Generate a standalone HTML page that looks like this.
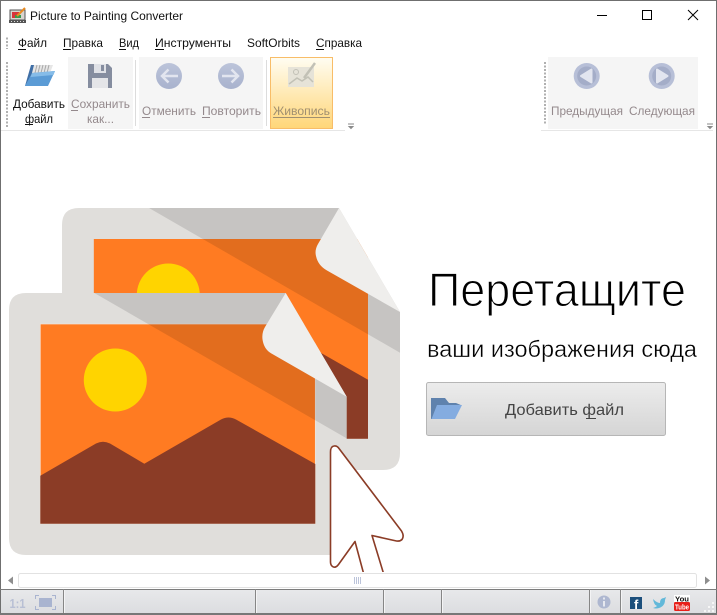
<!DOCTYPE html>
<html lang="ru"><head><meta charset="utf-8"><title>Picture to Painting Converter</title>
<style>
html,body{margin:0;padding:0;background:#fff;width:717px;height:615px;overflow:hidden}
svg{display:block;position:absolute;left:0;top:0}
text{font-family:"Liberation Sans",sans-serif}
</style></head><body>
<svg width="717" height="615" viewBox="0 0 717 615" xmlns="http://www.w3.org/2000/svg">
<defs>
<linearGradient id="live" x1="0" y1="0" x2="0" y2="1"><stop offset="0" stop-color="#fffdf2"/><stop offset="1" stop-color="#ffd678"/></linearGradient>
<linearGradient id="btn" x1="0" y1="0" x2="0" y2="1"><stop offset="0" stop-color="#ececec"/><stop offset="1" stop-color="#d5d5d5"/></linearGradient>
<linearGradient id="st" x1="0" y1="0" x2="0" y2="1"><stop offset="0" stop-color="#e8e9eb"/><stop offset="1" stop-color="#dcdde0"/></linearGradient>
<linearGradient id="orb" x1="0" y1="0" x2="0" y2="1"><stop offset="0" stop-color="#bcc4da"/><stop offset="1" stop-color="#a8b2cd"/></linearGradient>
<clipPath id="backc"><path d="M79 208H339L400 312V453Q400 470 383 470H79Q62 470 62 453V225Q62 208 79 208Z"/></clipPath>
<clipPath id="backo"><rect x="93.7" y="239" width="274.3" height="199.7"/></clipPath>
<clipPath id="frontc"><path d="M26 293H285.7L346.7 396.7V555H26Q9 555 9 538V310Q9 293 26 293Z"/></clipPath>
<clipPath id="curc"><rect x="320" y="440" width="100" height="132"/></clipPath>
</defs>
<rect width="717" height="615" fill="#fff"/>

<!-- window border -->
<rect x="0" y="0" width="717" height="1" fill="#6f6f6f"/>
<rect x="0" y="0" width="1" height="615" fill="#6f6f6f"/>
<rect x="716" y="0" width="1" height="615" fill="#6f6f6f"/>

<!-- title bar -->
<rect x="10" y="10" width="15" height="10" fill="#d8d4d0" stroke="#555" stroke-width="1"/>
<rect x="12" y="12" width="7" height="6" fill="#d8333a"/>
<rect x="15" y="15" width="6" height="3" fill="#3a9a4a"/>
<path d="M17 16L25 8" stroke="#e88a20" stroke-width="2"/>
<rect x="9" y="20" width="17" height="3" fill="#555"/>
<path d="M11 21.5h1M14 21.5h1M17 21.5h1M20 21.5h1M23 21.5h1" stroke="#ddd" stroke-width="1"/>
<text x="30" y="20" font-size="12" fill="#111" textLength="153" lengthAdjust="spacingAndGlyphs">Picture to Painting Converter</text>
<rect x="597" y="15" width="10" height="1" fill="#000"/>
<rect x="642.5" y="10.5" width="9" height="9" fill="none" stroke="#000"/>
<path d="M688 10L698 20M698 10L688 20" stroke="#000" stroke-width="1" fill="none"/>

<!-- menu -->
<path d="M7 37.500V49" stroke="#b0b0b0" stroke-width="2" stroke-dasharray="2 1.500"/>
<g font-size="12" fill="#111">
<text x="18" y="47" textLength="29" lengthAdjust="spacingAndGlyphs">Файл</text>
<text x="63" y="47" textLength="40" lengthAdjust="spacingAndGlyphs">Правка</text>
<text x="119" y="47" textLength="20" lengthAdjust="spacingAndGlyphs">Вид</text>
<text x="155" y="47" textLength="76" lengthAdjust="spacingAndGlyphs">Инструменты</text>
<text x="247" y="47" textLength="53" lengthAdjust="spacingAndGlyphs">SoftOrbits</text>
<text x="316" y="47" textLength="46" lengthAdjust="spacingAndGlyphs">Справка</text>
</g>
<g fill="#111">
<rect x="18" y="49" width="8" height="1"/><rect x="63" y="49" width="8" height="1"/><rect x="119" y="49" width="7" height="1"/><rect x="155" y="49" width="9" height="1"/><rect x="316" y="49" width="8" height="1"/>
</g>

<!-- toolbar -->
<path d="M7 62V128" stroke="#b0b0b0" stroke-width="2" stroke-dasharray="2 1.500"/>
<rect x="68" y="57" width="65" height="72" fill="#f5f5f5"/>
<rect x="135" y="60" width="1" height="66" fill="#dcdcdc"/>
<rect x="139" y="57" width="124" height="72" fill="#f5f5f5"/>
<rect x="266" y="60" width="1" height="66" fill="#dcdcdc"/>
<rect x="270.500" y="57.500" width="62" height="71" fill="url(#live)" stroke="#f8bd68"/>
<rect x="1" y="130" width="344" height="1" fill="#e6e6e6"/>
<path d="M348 124h6M349 126.500h4l-2 2z" stroke="#8a8a8a" stroke-width="1" fill="#8a8a8a"/>

<rect x="548" y="57" width="150" height="72" fill="#f5f5f5"/>
<path d="M545 62V124" stroke="#b0b0b0" stroke-width="2" stroke-dasharray="2 1.500"/>
<rect x="541" y="130" width="172" height="1" fill="#e6e6e6"/>
<path d="M707 124h6M708 126.500h4l-2 2z" stroke="#8a8a8a" stroke-width="1" fill="#8a8a8a"/>

<!-- add file icon -->
<path d="M31 65H36L29 86H25Z" fill="#3f6ea5"/>
<path d="M34 65H53L50 73H32Z" fill="#e6e6e6"/>
<path d="M37 65L35 73M40 65L38 73M43 65L41 73M46 65L44 73M49 65L47 73" stroke="#a8a8a8" stroke-width="1"/>
<path d="M32 73L55 71L48 86H25Z" fill="#5b9bd5"/>
<path d="M32 73L55 71L53.500 75L30.500 77Z" fill="#86bce8"/>
<!-- save icon -->
<path d="M88 64H108L112 68V88H88Z" fill="#858d9f"/>
<rect x="94" y="64" width="12" height="9" fill="#dfe1e6"/><rect x="101" y="65" width="3" height="6" fill="#858d9f"/>
<rect x="92" y="78" width="16" height="10" fill="#e4e5e8"/>
<!-- undo / redo -->
<circle cx="169" cy="76" r="13" fill="url(#orb)"/>
<path d="M178 76H163M168.500 69.500L162 76L168.500 82.500" fill="none" stroke="#e2e5ef" stroke-width="2.500"/>
<circle cx="231" cy="76" r="13" fill="url(#orb)"/>
<path d="M222 76H237M231.500 69.500L238 76L231.500 82.500" fill="none" stroke="#e2e5ef" stroke-width="2.500"/>
<!-- painting icon -->
<rect x="288" y="67" width="26" height="20" fill="#e6e3d8"/>
<circle cx="296" cy="72" r="2.500" fill="none" stroke="#c2c1b6"/>
<path d="M289 84L297 78L302 81L308 77L313 82" fill="none" stroke="#c2c1b6" stroke-width="1.500"/>
<path d="M304 78L315 63" stroke="#c2c1b6" stroke-width="2.500"/>
<!-- prev/next -->
<circle cx="586.700" cy="76" r="13" fill="#b7bfd7"/><circle cx="586.700" cy="76" r="9.500" fill="#a4adc8"/>
<path d="M581 76L591.500 69.500V82.500Z" fill="#e2e5ef" stroke="#e2e5ef" stroke-width="2" stroke-linejoin="round"/>
<circle cx="661.700" cy="76" r="13" fill="#b7bfd7"/><circle cx="661.700" cy="76" r="9.500" fill="#a4adc8"/>
<path d="M667.500 76L657 69.500V82.500Z" fill="#e2e5ef" stroke="#e2e5ef" stroke-width="2" stroke-linejoin="round"/>

<g font-size="12">
<text x="13" y="108" fill="#111" textLength="52" lengthAdjust="spacingAndGlyphs">Добавить</text>
<text x="25" y="123" fill="#111" textLength="28" lengthAdjust="spacingAndGlyphs">файл</text>
<g fill="#94898c">
<text x="71" y="108" textLength="59" lengthAdjust="spacingAndGlyphs">Сохранить</text>
<text x="87" y="123" textLength="27" lengthAdjust="spacingAndGlyphs">как...</text>
<text x="142" y="115" textLength="54" lengthAdjust="spacingAndGlyphs">Отменить</text>
<text x="202" y="115" textLength="59" lengthAdjust="spacingAndGlyphs">Повторить</text>
<text x="551" y="115" textLength="72" lengthAdjust="spacingAndGlyphs">Предыдущая</text>
<text x="629" y="115" textLength="66" lengthAdjust="spacingAndGlyphs">Следующая</text>
</g>
<text x="273" y="115" fill="#a08f70" textLength="57" lengthAdjust="spacingAndGlyphs">Живопись</text>
</g>
<rect x="25" y="124" width="8" height="1" fill="#111"/>
<g fill="#94898c"><rect x="71" y="110" width="7" height="1"/><rect x="142" y="117" width="8" height="1"/><rect x="202" y="117" width="8" height="1"/></g>
<rect x="273" y="117" width="57" height="1" fill="#a08f70"/>

<!-- illustration: back card -->
<g clip-path="url(#backc)">
<rect x="62" y="208" width="338" height="262" fill="#e0dedb"/>
<g clip-path="url(#backo)">
<rect x="93.700" y="239" width="274.300" height="199.700" fill="#ff7b22"/>
<circle cx="168.300" cy="295" r="31.500" fill="#ffd400"/>
<path d="M320.700 352.700L368 379.800V439H300V360Z" fill="#8b3c26"/>
</g>
<path d="M149 208H339L400 312V352.700Z" fill="#000" opacity=".115"/>
</g>
<path d="M339 208L400 312L327 270.500Q318 265.500 316 256Q314.500 250 318 244Z" fill="#efeeec"/>

<!-- front card -->
<g clip-path="url(#frontc)">
<rect x="9" y="293" width="338" height="262" fill="#e0dedb"/>
<rect x="40.300" y="324" width="275" height="199.700" fill="#ff7b22" stroke="#f3e3d8" stroke-width=".7"/>
<circle cx="115.300" cy="380" r="31.500" fill="#ffd400"/>
<path d="M40.300 475.700L96 443.500Q103 440 110 443.500L144.300 463.700L221 419.500Q228.500 415.500 236 419.500L315.300 464V523.700H40.300Z" fill="#8b3c26"/>
<path d="M94.300 293H285.700L346.700 396.700V438.400Z" fill="#000" opacity=".115"/>
</g>
<path d="M285.700 293L346.700 396.700L271 353.300Q264 349 262.600 340Q261.500 333 265 327Z" fill="#efeeec"/>

<!-- cursor -->
<g clip-path="url(#curc)">
<path d="M330.500 452Q330.500 446.500 334 446Q337 445.500 339 448.500L401.500 531Q404.500 536 402 539.500Q400 541.500 396.500 541L372 535.500L384 575H364L355 541.500L338.500 564.500Q335.500 568.500 332.500 566.500Q330.500 565 330.500 562Z" fill="#fff" stroke="#8b3c26" stroke-width="1.600" stroke-linejoin="round"/>
</g>

<!-- drop text (white stroke thins the glyphs to a light weight) -->
<text x="428" y="306" font-size="47" fill="#000" stroke="#fff" stroke-width="1.100" textLength="258" lengthAdjust="spacingAndGlyphs">Перетащите</text>
<text x="427" y="357" font-size="23" fill="#000" stroke="#fff" stroke-width=".35" textLength="270" lengthAdjust="spacingAndGlyphs">ваши изображения сюда</text>
<rect x="426.500" y="382.500" width="239" height="53" rx="2" fill="url(#btn)" stroke="#b6b6b6"/>
<path d="M431 398H445L449 403H456L462 405.500H437L432 419H431Z" fill="#5f82ad"/>
<path d="M437 405H462L455 419H431.500Z" fill="#84ace0"/>
<text x="505" y="415" font-size="16" fill="#444" textLength="119" lengthAdjust="spacingAndGlyphs">Добавить файл</text>
<rect x="586" y="418" width="10" height="1" fill="#444"/>

<!-- scrollbar -->
<rect x="18.500" y="573.500" width="678" height="14" rx="2" fill="#fff" stroke="#e2e2e2"/>
<path d="M8 580.500L13 576.500V584.500Z" fill="#8e8e8e"/>
<path d="M710 580.500L705 576.500V584.500Z" fill="#8e8e8e"/>
<path d="M354.500 577V584M356.500 577V584M358.500 577V584M360.500 577V584" stroke="#bcc4da" stroke-width="1"/>

<!-- status bar -->
<rect x="1" y="589" width="715" height="24" fill="url(#st)"/>
<rect x="0" y="589" width="717" height="1" fill="#7c7c7c"/>
<rect x="0" y="613" width="717" height="2" fill="#777"/>
<g fill="#868686"><rect x="63" y="589" width="1" height="24"/><rect x="255" y="589" width="1" height="24"/><rect x="383" y="589" width="1" height="24"/><rect x="441" y="589" width="1" height="24"/><rect x="589" y="589" width="1" height="24"/><rect x="620" y="589" width="1" height="24"/></g>
<g fill="#f4f4f5"><rect x="64" y="590" width="1" height="23"/><rect x="256" y="590" width="1" height="23"/><rect x="384" y="590" width="1" height="23"/><rect x="442" y="590" width="1" height="23"/><rect x="590" y="590" width="1" height="23"/><rect x="621" y="590" width="1" height="23"/></g>
<text x="9.500" y="608" font-size="13" font-weight="bold" fill="#b8bfd4" textLength="16" lengthAdjust="spacingAndGlyphs">1:1</text>
<path d="M35.500 599V595.500H39M52 595.500H55.500V599M55.500 606V609.500H52M39 609.500H35.500V606" fill="none" stroke="#a9b4d0"/>
<rect x="39" y="598" width="13" height="9" fill="#a9b4d0"/>
<circle cx="604" cy="602" r="6.500" fill="#aeb7d0"/>
<rect x="603" y="601" width="2" height="5.500" fill="#e6e8ef"/><rect x="603" y="597.500" width="2" height="2" fill="#e6e8ef"/>
<rect x="630" y="597" width="12" height="12" fill="#1c4f7c"/>
<text x="634" y="609" font-size="13" font-weight="bold" fill="#fff">f</text>
<path d="M653 599Q657 603 660 603Q660 598 664 598L666 597L665 600Q665 606 659 608Q656 609 653 608Q656 607 657 606Q654 605 653 599Z" fill="#62b8d9"/>
<rect x="674" y="595" width="16" height="7" fill="#fff"/>
<text x="675" y="601.500" font-size="7.500" font-weight="bold" fill="#111" textLength="14" lengthAdjust="spacingAndGlyphs">You</text>
<rect x="674" y="602" width="16" height="9" rx="1.500" fill="#e8201a"/>
<text x="675" y="609.500" font-size="7.500" font-weight="bold" fill="#fff" textLength="14" lengthAdjust="spacingAndGlyphs">Tube</text>
<g fill="#f6f6f6"><rect x="712" y="602" width="2" height="2"/><rect x="708" y="606" width="2" height="2"/><rect x="712" y="606" width="2" height="2"/><rect x="704" y="610" width="2" height="2"/><rect x="708" y="610" width="2" height="2"/><rect x="712" y="610" width="2" height="2"/></g>
</svg>
</body></html>
